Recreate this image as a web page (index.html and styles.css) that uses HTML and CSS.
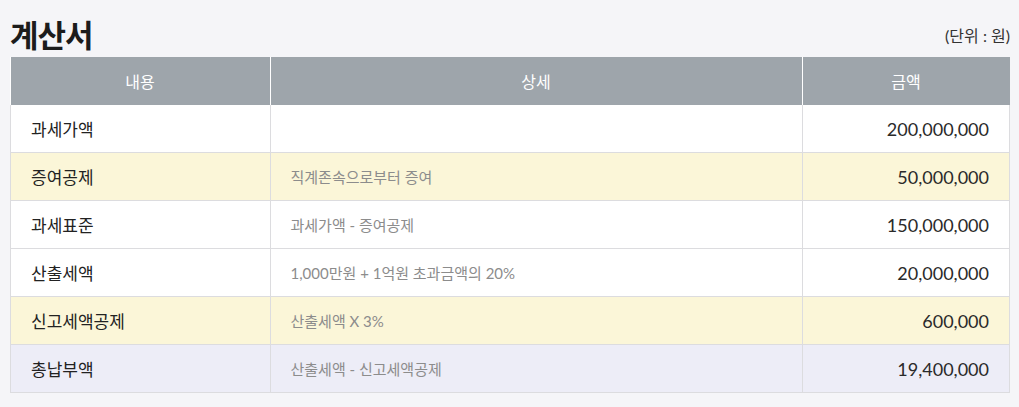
FILE: index.html
```html
<!DOCTYPE html>
<html lang="ko">

<head>
    <meta charset="UTF-8">
    <meta name="viewport" content="width=device-width, initial-scale=1.0">
    <title>계산서</title>
    <link rel="stylesheet" href="styles.css">
</head>

<body>
    <div class="wrap">
        <div class="top">
            <h1 class="title">계산서</h1>
            <span class="unit">(단위 : 원)</span>
        </div>
        <table class="calc">
            <thead>
                <tr>
                    <th class="c-name">내용</th>
                    <th class="c-desc">상세</th>
                    <th class="c-amt">금액</th>
                </tr>
            </thead>
            <tbody>
                <tr>
                    <td class="name">과세가액</td>
                    <td class="desc"></td>
                    <td class="amt">200,000,000</td>
                </tr>
                <tr class="yellow">
                    <td class="name">증여공제</td>
                    <td class="desc">직계존속으로부터 증여</td>
                    <td class="amt">50,000,000</td>
                </tr>
                <tr>
                    <td class="name">과세표준</td>
                    <td class="desc">과세가액 - 증여공제</td>
                    <td class="amt">150,000,000</td>
                </tr>
                <tr>
                    <td class="name">산출세액</td>
                    <td class="desc">1,000만원 + 1억원 초과금액의 20%</td>
                    <td class="amt">20,000,000</td>
                </tr>
                <tr class="yellow">
                    <td class="name">신고세액공제</td>
                    <td class="desc">산출세액 X 3%</td>
                    <td class="amt">600,000</td>
                </tr>
                <tr class="total">
                    <td class="name">총납부액</td>
                    <td class="desc">산출세액 - 신고세액공제</td>
                    <td class="amt">19,400,000</td>
                </tr>
            </tbody>
        </table>
    </div>
</body>

</html>
```

FILE: styles.css
```css
body {
    margin: 0;
    background-color: #f5f5f8;
    font-family: Lato, "Noto Sans CJK KR", sans-serif;
    color: #222;
}

.wrap {
    padding: 10px 9px 0 10px;
}

.top {
    display: flex;
    justify-content: space-between;
    align-items: flex-end;
    height: 47px;
}

.title {
    margin: 0 0 6px 0;
    font-size: 31px;
    font-weight: 700;
    line-height: 32px;
    color: #1c1c1c;
    letter-spacing: -1px;
}

.unit {
    font-size: 16px;
    color: #333;
    margin-bottom: 10px;
}

.calc {
    width: 1000px;
    border-collapse: collapse;
    table-layout: fixed;
    background-color: #fff;
}

.calc th {
    height: 48px;
    padding: 0;
    background-color: #9ea5ab;
    color: #fff;
    font-size: 16px;
    font-weight: 400;
    border-left: 1px solid #fff;
}

.calc th:first-child {
    border-left: none;
}

.c-name {
    width: 259px;
}

.c-amt {
    width: 207px;
}

.calc td {
    height: 47px;
    padding: 0 20px;
    border: 1px solid #dcdcdf;
}

.calc tbody tr:first-child td {
    border-top: none;
}

.name {
    font-size: 17px;
    color: #222;
}

.desc {
    font-size: 15px;
    color: #8c8c8c;
}

.amt {
    text-align: right;
    font-size: 18px;
    color: #2a2a2a;
}

.yellow td {
    background-color: #fbf6d8;
}

.total td {
    background-color: #ededf7;
}
```
